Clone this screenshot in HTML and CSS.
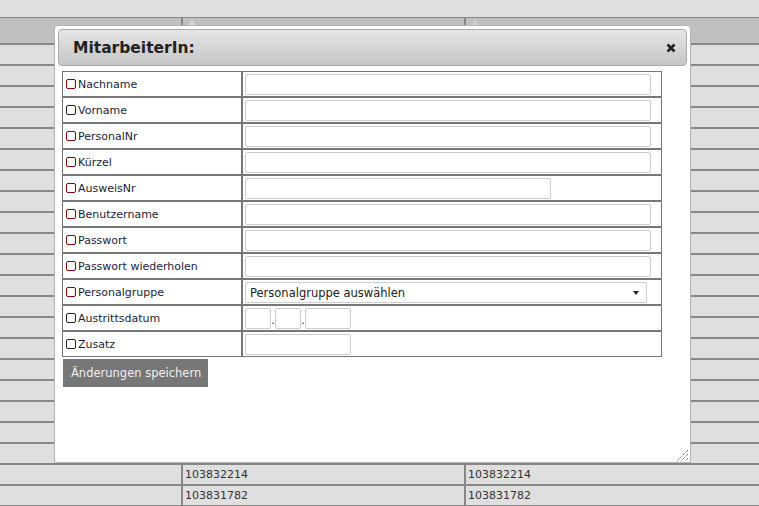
FILE: index.html
```html
<!DOCTYPE html>
<html lang="de">
<head>
<meta charset="utf-8">
<title>MitarbeiterIn</title>
<link rel="stylesheet" href="styles.css">
</head>
<body>
<div class="page">
  <div class="grid">
    <div class="topband"></div>
    <div class="row head">
      <div class="cell c1"></div>
      <div class="cell c2"><span class="sort"></span></div>
      <div class="cell c3"><span class="sort faded"></span></div>
    </div>
    <div class="row"><div class="cell c1"></div><div class="cell c2"></div><div class="cell c3"></div></div>
    <div class="row"><div class="cell c1"></div><div class="cell c2"></div><div class="cell c3"></div></div>
    <div class="row"><div class="cell c1"></div><div class="cell c2"></div><div class="cell c3"></div></div>
    <div class="row"><div class="cell c1"></div><div class="cell c2"></div><div class="cell c3"></div></div>
    <div class="row"><div class="cell c1"></div><div class="cell c2"></div><div class="cell c3"></div></div>
    <div class="row"><div class="cell c1"></div><div class="cell c2"></div><div class="cell c3"></div></div>
    <div class="row"><div class="cell c1"></div><div class="cell c2"></div><div class="cell c3"></div></div>
    <div class="row"><div class="cell c1"></div><div class="cell c2"></div><div class="cell c3"></div></div>
    <div class="row"><div class="cell c1"></div><div class="cell c2"></div><div class="cell c3"></div></div>
    <div class="row"><div class="cell c1"></div><div class="cell c2"></div><div class="cell c3"></div></div>
    <div class="row"><div class="cell c1"></div><div class="cell c2"></div><div class="cell c3"></div></div>
    <div class="row"><div class="cell c1"></div><div class="cell c2"></div><div class="cell c3"></div></div>
    <div class="row"><div class="cell c1"></div><div class="cell c2"></div><div class="cell c3"></div></div>
    <div class="row"><div class="cell c1"></div><div class="cell c2"></div><div class="cell c3"></div></div>
    <div class="row"><div class="cell c1"></div><div class="cell c2"></div><div class="cell c3"></div></div>
    <div class="row"><div class="cell c1"></div><div class="cell c2"></div><div class="cell c3"></div></div>
    <div class="row"><div class="cell c1"></div><div class="cell c2"></div><div class="cell c3"></div></div>
    <div class="row"><div class="cell c1"></div><div class="cell c2"></div><div class="cell c3"></div></div>
    <div class="row"><div class="cell c1"></div><div class="cell c2"></div><div class="cell c3"></div></div>
    <div class="row"><div class="cell c1"></div><div class="cell c2"></div><div class="cell c3"></div></div>
    <div class="row"><div class="cell c1"></div><div class="cell c2">103832214</div><div class="cell c3">103832214</div></div>
    <div class="row last"><div class="cell c1"></div><div class="cell c2">103831782</div><div class="cell c3">103831782</div></div>
  </div>

  <div class="dialog">
    <div class="titlebar">
      <span class="title">MitarbeiterIn:</span>
      <svg class="close" width="10" height="10" viewBox="0 0 10 10"><path d="M1.5 1.5 L8.5 8.5 M8.5 1.5 L1.5 8.5" stroke="#222" stroke-width="2.6" fill="none"/></svg>
    </div>
    <div class="content">
      <table class="form">
        <colgroup><col class="col-label"><col class="col-field"></colgroup>
        <tr><td class="lbl"><span class="chk req"></span>Nachname</td><td><input class="txt" type="text"></td></tr>
        <tr><td class="lbl"><span class="chk"></span>Vorname</td><td><input class="txt" type="text"></td></tr>
        <tr><td class="lbl"><span class="chk req"></span>PersonalNr</td><td><input class="txt" type="text"></td></tr>
        <tr><td class="lbl"><span class="chk req"></span>Kürzel</td><td><input class="txt" type="text"></td></tr>
        <tr><td class="lbl"><span class="chk req"></span>AusweisNr</td><td><input class="txt short" type="text"></td></tr>
        <tr><td class="lbl"><span class="chk req"></span>Benutzername</td><td><input class="txt" type="text"></td></tr>
        <tr><td class="lbl"><span class="chk req"></span>Passwort</td><td><input class="txt" type="password"></td></tr>
        <tr><td class="lbl"><span class="chk req"></span>Passwort wiederholen</td><td><input class="txt" type="password"></td></tr>
        <tr><td class="lbl"><span class="chk req"></span>Personalgruppe</td><td><div class="selwrap"><select class="sel"><option>Personalgruppe auswählen</option></select><span class="arrow"></span></div></td></tr>
        <tr><td class="lbl"><span class="chk"></span>Austrittsdatum</td><td><div class="date"><input class="txt d2" type="text"><span class="dot">.</span><input class="txt d2" type="text"><span class="dot">.</span><input class="txt d4" type="text"></div></td></tr>
        <tr><td class="lbl"><span class="chk"></span>Zusatz</td><td><input class="txt mid" type="text"></td></tr>
      </table>
      <button class="save" type="button">Änderungen speichern</button>
    </div>
    <svg class="grip" width="11" height="11" viewBox="0 0 11 11"><path d="M11 0 L0 11 M11 4 L4 11 M11 8 L8 11" stroke="#444" stroke-width="1" stroke-dasharray="1 1" fill="none"/></svg>
  </div>
</div>
</body>
</html>
```

FILE: styles.css
```css
* { box-sizing: border-box; }

body {
  margin: 0;
  background: #dfdfdf;
  font-family: "DejaVu Sans", Verdana, sans-serif;
  font-size: 11px;
  color: #333;
  overflow: hidden;
}

.page {
  position: relative;
  width: 759px;
  height: 506px;
  overflow: hidden;
}

.topband {
  height: 18px;
  border-bottom: 1px solid #888;
}

.row {
  display: flex;
  height: 21px;
  border-top: 2px solid #888;
  line-height: 19px;
}

.row.head {
  height: 25px;
  border-top: 0;
  background: #c0c0c0;
}

.row.last {
  height: 22px;
  border-bottom: 1px solid #888;
}

.cell.c1 { width: 181px; }
.cell.c2 { width: 283px; border-left: 2px solid #888; padding-left: 2px; }
.cell.c3 { flex: 1; border-left: 2px solid #888; padding-left: 2px; }

.sort {
  display: inline-block;
  vertical-align: top;
  margin: 2px 0 0 4px;
  width: 0;
  height: 0;
  border-left: 3px solid transparent;
  border-right: 3px solid transparent;
  border-bottom: 5px solid #dadada;
}
.sort.faded { border-bottom-color: #d2d2d2; }

.dialog {
  position: absolute;
  left: 54px;
  top: 25px;
  width: 637px;
  height: 438px;
  background: #fff;
  border: 1px solid #b4b4b4;
  border-radius: 4px 4px 0 0;
  padding: 3px;
}

.titlebar {
  height: 37px;
  border: 1px solid #aaa;
  border-radius: 4px;
  background: linear-gradient(#e6e6e6, #c6c6c6);
  display: flex;
  align-items: center;
  justify-content: space-between;
  padding: 0 10px 0 14px;
}

.title {
  font-weight: bold;
  font-size: 15.5px;
  color: #222;
}

.close { display: block; }

.content {
  padding: 5px 4px 0 4px;
}

.form {
  border-collapse: separate;
  border-spacing: 0;
  table-layout: fixed;
  width: 600px;
}

.col-label { width: 180px; }
.col-field { width: 420px; }

.form td {
  border: 1px solid #777;
  padding: 0;
  height: 26px;
  vertical-align: top;
}

.form td.lbl {
  color: #1c1c38;
  white-space: nowrap;
  line-height: 22px;
  padding-top: 2px;
}

.chk {
  display: inline-block;
  vertical-align: top;
  width: 10px;
  height: 10px;
  margin: 5px 2px 0 3px;
  border: 1px solid #222;
  border-radius: 2px;
}
.chk.req { border-color: #8b0000; }

.txt {
  display: block;
  width: 406px;
  height: 21px;
  margin: 2px 0 1px 2px;
  border: 1px solid #cdcdcd;
  border-radius: 2px;
  background: #fff;
  padding: 0 3px;
  font: 11px "DejaVu Sans", Verdana, sans-serif;
}
.txt.short { width: 306px; }
.txt.mid { width: 106px; }

.selwrap {
  position: relative;
  width: 402px;
  margin: 2px 0 1px 2px;
}

.sel {
  display: block;
  width: 402px;
  height: 21px;
  border: 1px solid #cdcdcd;
  border-radius: 2px;
  background: #fff;
  padding: 0 0 0 4px;
  font: 11.5px "DejaVu Sans", Verdana, sans-serif;
  color: #222;
  -webkit-appearance: none;
  appearance: none;
}

.arrow {
  position: absolute;
  right: 8px;
  top: 9px;
  width: 0;
  height: 0;
  border-left: 3.5px solid transparent;
  border-right: 3.5px solid transparent;
  border-top: 4px solid #222;
}

.date {
  display: flex;
  align-items: flex-end;
  height: 21px;
  margin: 2px 0 1px 2px;
}
.date .txt { margin: 0; }
.txt.d2 { width: 26px; }
.txt.d4 { width: 46px; }
.dot {
  width: 4px;
  text-align: center;
  line-height: 16px;
  color: #222;
}

.save {
  display: block;
  margin: 2px 0 0 1px;
  width: 145px;
  height: 28px;
  border: 0;
  background: #777;
  color: #f0f0f0;
  font: 11.5px "DejaVu Sans", Verdana, sans-serif;
  white-space: nowrap;
  text-align: left;
  padding: 0 8px;
}

.grip {
  position: absolute;
  right: 2px;
  bottom: 1px;
}
```
